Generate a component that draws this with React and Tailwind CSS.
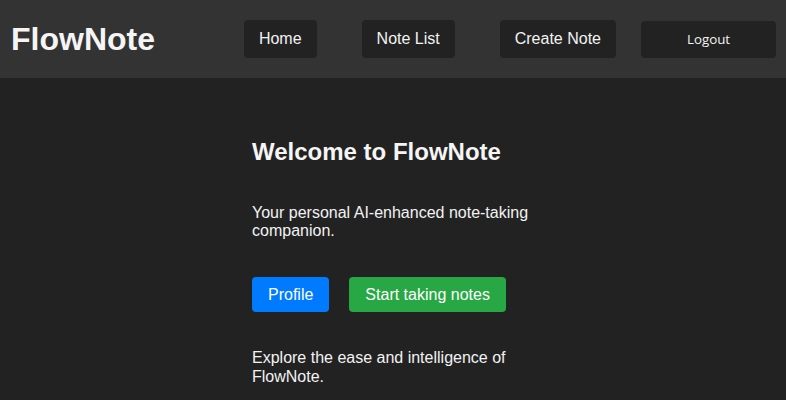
import React from "react";

const navLinks = ["Home", "Note List", "Create Note"];

const App = () => {
    return (
        <div className="min-h-[400px] bg-[#222222] text-[#f2f2f2]" style={{ fontFamily: '"Liberation Sans", Arial, sans-serif' }}>
            <header className="h-[78px] bg-[#333333] flex items-center pl-[11px] pr-[10px]">
                <h1 className="text-[32px] font-bold leading-none text-[#f5f5f5]">FlowNote</h1>
                <nav className="ml-auto flex items-center">
                    <div className="flex items-center gap-[45px]">
                        {navLinks.map((link) => (
                            <a key={link} href="#" className="h-[38px] px-[15px] flex items-center bg-[#222222] rounded-[4px] text-base text-[#f2f2f2]">
                                {link}
                            </a>
                        ))}
                    </div>
                    <button
                        className="ml-[25px] w-[135px] h-[37px] pt-[2px] bg-[#222222] rounded-[4px] text-[13.33px] text-[#f2f2f2]"
                        style={{ fontFamily: '"Open Sans", sans-serif' }}
                    >
                        Logout
                    </button>
                </nav>
            </header>
            <main className="w-[282px] mx-auto pt-[60px]">
                <h2 className="text-2xl font-bold leading-[27.6px] text-[#f5f5f5]">Welcome to FlowNote</h2>
                <p className="mt-[38px] text-base leading-[18.4px]">Your personal AI-enhanced note-taking companion.</p>
                <div className="mt-[37px] flex gap-[20px]">
                    <button className="h-[35px] px-[16px] bg-[#007bff] text-white rounded-[4px] text-base">Profile</button>
                    <button className="h-[35px] px-[16px] bg-[#28a745] text-white rounded-[4px] text-base">Start taking notes</button>
                </div>
                <p className="mt-[37px] text-base leading-[18.4px]">Explore the ease and intelligence of FlowNote.</p>
            </main>
        </div>
    );
};

export default App;
